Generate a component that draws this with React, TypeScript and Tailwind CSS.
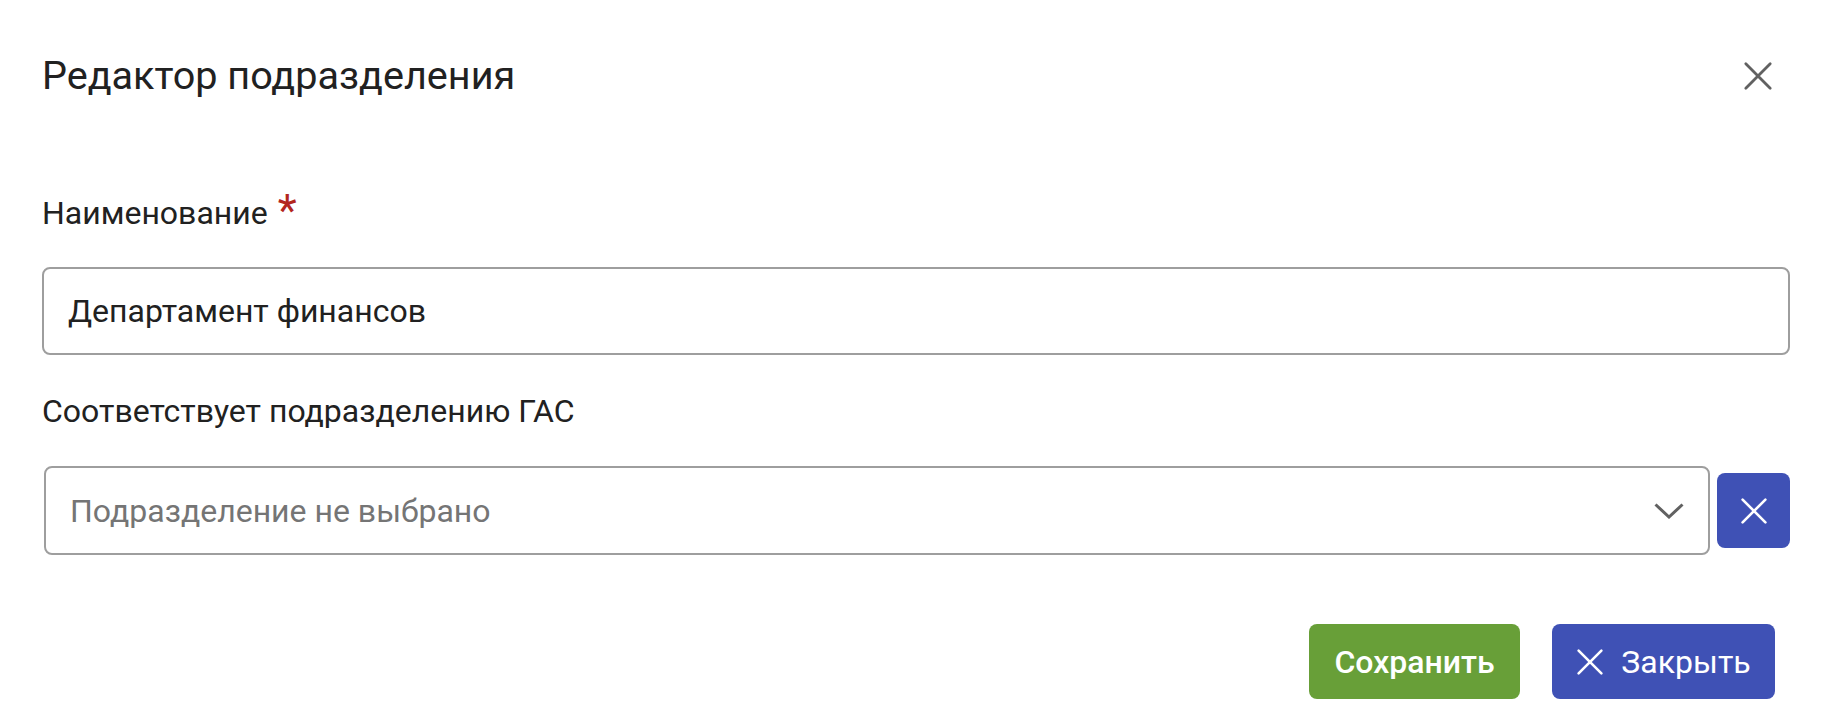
const Cross = ({ size, stroke, className }: { size: number; stroke: number; className?: string }) => (
  <svg width={size} height={size} viewBox={`0 0 ${size} ${size}`} className={className} fill="none" stroke="currentColor" strokeWidth={stroke} strokeLinecap="round">
    <path d={`M${stroke} ${stroke}L${size - stroke} ${size - stroke}M${size - stroke} ${stroke}L${stroke} ${size - stroke}`} />
  </svg>
)

export default function App() {
  return (
    <div className="w-[1832px] h-[724px] bg-white px-[42px] text-[#212121]" style={{ fontFamily: 'Roboto, "Noto Sans", sans-serif' }}>
      <div className="h-[152px] flex items-center justify-between">
        <h1 className="text-[39.6px] leading-[44px] font-normal">Редактор подразделения</h1>
        <button className="w-[40px] h-[40px] flex items-center justify-center mr-[12px] text-[#616161]">
          <Cross size={30} stroke={2.8} />
        </button>
      </div>

      <label className="mt-[41px] flex items-start text-[32px] leading-[40px]">
        <span>Наименование</span>
        <span className="ml-[10px] text-[#b3261e] text-[44px] leading-[36px]">*</span>
      </label>
      <div className="mt-[34px] h-[88px] border-2 border-[#9e9e9e] rounded-[8px] flex items-center px-[24px]">
        <span className="text-[32px]">Департамент финансов</span>
      </div>

      <label className="mt-[36px] block text-[32px] leading-[40px]">Соответствует подразделению ГАС</label>
      <div className="mt-[35px] flex items-center gap-[7px]">
        <div className="flex-1 ml-[2px] h-[89px] border-2 border-[#9e9e9e] rounded-[8px] flex items-center justify-between pl-[24px] pr-[22px]">
          <span className="text-[32px] text-[#757575]">Подразделение не выбрано</span>
          <svg width="30" height="16" viewBox="0 0 30 16" fill="none" stroke="#616161" strokeWidth="3" className="mr-[2px]">
            <path d="M1.5 1.5L15 14L28.5 1.5" />
          </svg>
        </div>
        <button className="w-[73px] h-[75px] bg-[#3f51b5] rounded-[8px] flex items-center justify-center text-white">
          <Cross size={28} stroke={2.6} />
        </button>
      </div>

      <div className="mt-[69px] flex justify-end gap-[32px] mr-[15px]">
        <button className="h-[75px] w-[211px] bg-[#689f38] rounded-[8px] text-white text-[32px] font-medium">Сохранить</button>
        <button className="h-[75px] w-[223px] bg-[#3f51b5] rounded-[8px] text-white text-[32px] flex items-center justify-center gap-[17px]">
          <Cross size={28} stroke={2.6} />
          <span>Закрыть</span>
        </button>
      </div>
    </div>
  )
}
